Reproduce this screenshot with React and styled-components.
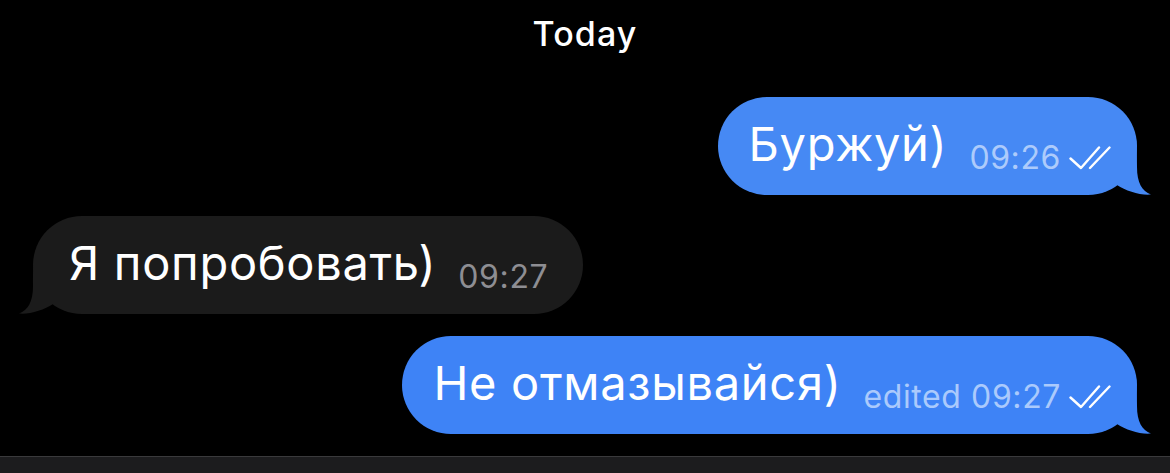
import React from 'react';
import styled, { createGlobalStyle } from 'styled-components';

const GlobalStyle = createGlobalStyle`
  html, body {
    margin: 0;
    padding: 0;
    background: #000;
  }
`;

const Screen = styled.div`
  height: 473px;
  background: #000;
  display: flex;
  flex-direction: column;
  font-family: Inter, "Noto Sans", "DejaVu Sans", sans-serif;
  color: #fff;
  overflow: hidden;
`;

const DateLabel = styled.div`
  margin-top: 14px;
  text-align: center;
  font-size: 34px;
  line-height: 40px;
  font-weight: 500;
  letter-spacing: 1.1px;
`;

const Row = styled.div`
  display: flex;
  justify-content: ${p => (p.$out ? 'flex-end' : 'flex-start')};
  padding: 0 33px;
  margin-top: ${p => p.$gap}px;
`;

const Bubble = styled.div`
  position: relative;
  box-sizing: border-box;
  height: 98px;
  padding: 19px ${p => (p.$out ? 26 : 35)}px 0 ${p => (p.$out ? 31 : 36)}px;
  border-radius: 49px;
  background: ${p => p.$color};
  white-space: nowrap;
  font-size: 47px;
  line-height: 56px;
  letter-spacing: 0.7px;
`;

const Meta = styled.span`
  display: inline-flex;
  align-items: center;
  gap: 8px;
  margin-left: 22px;
  font-size: 32px;
  line-height: 36px;
  letter-spacing: 0.6px;
  vertical-align: -8px;
  color: ${p => (p.$out ? 'rgba(214, 230, 255, 0.72)' : '#8e8e93')};
`;

const Tail = styled.svg`
  position: absolute;
  bottom: 0;
  ${p => (p.$out ? 'right: -15px;' : 'left: -15px; transform: scaleX(-1);')}
`;

function BubbleTail({ out, color }) {
  return (
    <Tail $out={out} width="42" height="56" viewBox="0 0 42 56">
      <path
        d="M26 0 C27 8 27 14 27 28 C27 44 32 52 41 55.5 C30 56.5 16 52 7 46 L7 0 Z"
        fill={color}
      />
    </Tail>
  );
}

function ReadChecks() {
  return (
    <svg width="42" height="24" viewBox="0 0 42 24">
      <g fill="none" stroke="#fff" strokeWidth="2.4" strokeLinecap="round" strokeLinejoin="round">
        <path d="M1.5 12.5 L12 22 L30 1.5" />
        <path d="M21 22 L40.5 1.5" />
      </g>
    </svg>
  );
}

function Message({ out, color, text, time, gap }) {
  return (
    <Row $out={out} $gap={gap}>
      <Bubble $out={out} $color={color}>
        {text}
        <Meta $out={out}>
          {time}
          {out && <ReadChecks />}
        </Meta>
        <BubbleTail out={out} color={color} />
      </Bubble>
    </Row>
  );
}

const Composer = styled.div`
  margin-top: auto;
  height: 16px;
  background: #1c1c1e;
  border-top: 1px solid #3a3a3c;
`;

export default function App() {
  return (
    <>
      <GlobalStyle />
      <Screen>
        <DateLabel>Today</DateLabel>
        <Message out gap={43} color="#4689f4" text="Буржуй)" time="09:26" />
        <Message gap={21} color="#1b1b1b" text="Я попробовать)" time="09:27" />
        <Message out gap={22} color="#3e83f6" text="Не отмазывайся)" time="edited 09:27" />
        <Composer />
      </Screen>
    </>
  );
}
